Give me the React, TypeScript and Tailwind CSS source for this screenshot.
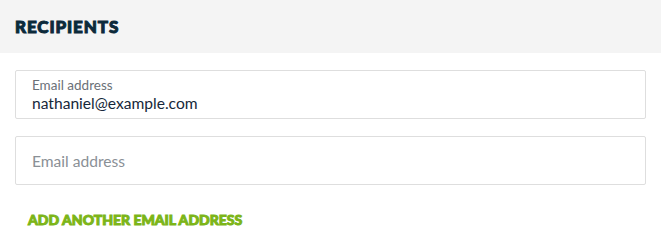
import React, { useState } from 'react';

const heading = "font-['Lato',_'Liberation_Sans',_sans-serif] font-black uppercase [-webkit-text-stroke:1px_currentColor]";
const body = "font-['Lato',_'Liberation_Sans',_sans-serif]";

export default function App() {
    const [emails, setEmails] = useState<string[]>(['nathaniel@example.com', '']);

    return (
        <div className="w-[661px] h-[252px] bg-white">
            {/* HEADER */}
            <div className="h-[53px] bg-[#f4f4f4] px-[15px] flex items-center">
                <h2 className={`${heading} text-[17px] text-[#0c2a3b] tracking-[0.9px]`}>Recipients</h2>
            </div>

            {/* EMAIL FIELDS */}
            <div className="px-[15px] pt-[17px] flex flex-col gap-[17px]">
                {emails.map((email, i) => (
                    <label
                        key={i}
                        className="h-[49px] border border-[#dedede] rounded-[2px] bg-white px-[16px] flex flex-col justify-center"
                    >
                        {email ? (
                            <>
                                <span className={`${body} text-[13.5px] leading-[16px] text-[#6b7178]`}>Email address</span>
                                <input
                                    type="email"
                                    value={email}
                                    onChange={(e) => setEmails(emails.map((v, j) => (j === i ? e.target.value : v)))}
                                    className={`${body} text-[15.6px] leading-[20px] text-[#16283a] outline-none bg-transparent p-0`}
                                />
                            </>
                        ) : (
                            <input
                                type="email"
                                value={email}
                                placeholder="Email address"
                                onChange={(e) => setEmails(emails.map((v, j) => (j === i ? e.target.value : v)))}
                                className={`${body} text-[15.6px] leading-[20px] text-[#16283a] placeholder:text-[#8a9096] outline-none bg-transparent p-0`}
                            />
                        )}
                    </label>
                ))}
            </div>

            <button
                onClick={() => setEmails([...emails, ''])}
                className={`${heading} ml-[28px] mt-[24px] text-[14px] text-[#7cb518] tracking-[0px]`}
            >
                Add another email address
            </button>
        </div>
    );
}
